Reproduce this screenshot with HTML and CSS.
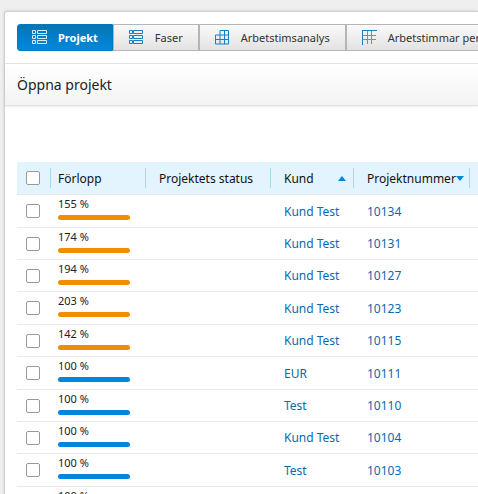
FILE: index.html
```html
<!DOCTYPE html>
<html lang="sv">
  <head>
    <meta charset="UTF-8" />
    <title>Öppna projekt</title>
    <link rel="stylesheet" href="styles.css">
  </head>
  <body>
    <main class="panel">
      <nav class="tabs">
        <button type="button" class="tab active">
          <svg class="icon" viewBox="0 0 15 15">
            <path d="M.5 .5h3v3h-3zM5.5 .5h9v3h-9zM.5 5.5h3v3h-3zM5.5 5.5h9v3h-9zM.5 10.5h3v3h-3zM5.5 10.5h9v3h-9z" />
          </svg>
          Projekt
        </button>
        <button type="button" class="tab">
          <svg class="icon" viewBox="0 0 15 15">
            <path d="M.5 .5h3v3h-3zM4.5 .5h9v3h-9zM.5 5.5h3v3h-3zM4.5 5.5h9v3h-9zM.5 10.5h3v3h-3zM4.5 10.5h9v3h-9z" />
          </svg>
          Faser
        </button>
        <button type="button" class="tab">
          <svg class="icon" viewBox="0 0 15 15">
            <path d="M5 .5h8.5v13.500h-13v-9h13M.5 9.500h13M5 .5v13.500M9.500 .5v13.500" />
          </svg>
          Arbetstimsanalys
        </button>
        <button type="button" class="tab">
          <svg class="icon" viewBox="0 0 15 15">
            <path d="M0 .5h15M.5 0v15" />
            <path class="thin" d="M1 5.5h13M1 9.5h13M5.5 1v13M9.5 1v13" />
          </svg>
          Arbetstimmar per fas
        </button>
      </nav>

      <h1 class="title">Öppna projekt</h1>

      <div class="list">
        <table class="projects">
          <thead>
            <tr>
              <th class="col-check"><input type="checkbox" aria-label="Markera alla" /></th>
              <th class="col-progress">Förlopp</th>
              <th class="col-status">Projektets status</th>
              <th class="col-customer"><span class="sort">Kund <i class="arrow up"></i></span></th>
              <th class="col-number"><span class="sort">Projektnummer<i class="arrow down"></i></span></th>
              <th></th>
            </tr>
          </thead>
          <tbody id="rows"></tbody>
        </table>
      </div>
    </main>

    <script>
      const projects = [
        { progress: 155, customer: "Kund Test", number: 10134 },
        { progress: 174, customer: "Kund Test", number: 10131 },
        { progress: 194, customer: "Kund Test", number: 10127 },
        { progress: 203, customer: "Kund Test", number: 10123 },
        { progress: 142, customer: "Kund Test", number: 10115 },
        { progress: 100, customer: "EUR", number: 10111 },
        { progress: 100, customer: "Test", number: 10110 },
        { progress: 100, customer: "Kund Test", number: 10104 },
        { progress: 100, customer: "Test", number: 10103 },
        { progress: 100, customer: "Test", number: 10102 },
      ];

      document.getElementById("rows").innerHTML = projects
        .map(
          (p) => `<tr>
          <td><input type="checkbox" aria-label="Markera ${p.number}" /></td>
          <td class="progress">${p.progress} %<div class="bar ${p.progress > 100 ? "over" : ""}"></div></td>
          <td></td>
          <td><a href="#">${p.customer}</a></td>
          <td><a href="#">${p.number}</a></td>
          <td></td>
        </tr>`
        )
        .join("");
    </script>
  </body>
</html>
```

FILE: styles.css
```css
* {
  box-sizing: border-box;
}

html {
  height: 100%;
  overflow: hidden;
}

body {
  height: 100%;
  margin: 0;
  padding: 11px 0 0 4px;
  overflow: hidden;
  background: #efefef;
  color: #222;
  font-family: "Noto Sans", "Open Sans", sans-serif;
  font-size: 12px;
}

.panel {
  min-height: 100%;
  background: #fff;
  border: 1px solid #d0d0d0;
  border-right: none;
  border-radius: 3px 0 0 0;
  box-shadow: 0 0 3px rgba(0, 0, 0, 0.15);
}

.tabs {
  display: flex;
  padding: 12px 0 12px 12px;
  overflow: hidden;
}

.tab {
  display: flex;
  flex: none;
  align-items: center;
  gap: 11px;
  height: 27px;
  padding: 0 15px;
  border: 1px solid #b5b5b5;
  background: linear-gradient(#fafafa, #e2e2e2);
  color: #333;
  font-family: inherit;
  font-size: 11px;
  white-space: nowrap;
  cursor: pointer;
}

.tab.active {
  padding: 0 14px;
  border-color: #0078bd;
  border-radius: 3px 0 0 3px;
  background: linear-gradient(#0874b4, #0088dd);
  color: #fff;
  font-weight: bold;
}

.icon {
  width: 15px;
  height: 15px;
  fill: none;
  stroke: #1580bd;
}

.icon .thin {
  stroke: #4b9dcc;
}

.active .icon {
  stroke: #d5ecfa;
}

.title {
  margin: 0;
  padding: 0 12px;
  border-top: 1px solid #e2e2e2;
  border-bottom: 1px solid #e2e2e2;
  background: linear-gradient(#fff, #f3f3f3);
  box-shadow: 0 1px 2px rgba(0, 0, 0, 0.06);
  font-size: 14px;
  font-weight: normal;
  line-height: 41px;
}

.list {
  padding: 56px 0 0 12px;
  overflow: hidden;
}

.projects {
  width: 100%;
  min-width: 600px;
  border-collapse: separate;
  border-spacing: 0;
  table-layout: fixed;
}

th,
td {
  height: 32px;
  padding: 0 0 0 13px;
  border-bottom: 1px solid #e8e8e8;
  text-align: left;
  font-weight: normal;
  white-space: nowrap;
}

th {
  height: 33px;
  background: linear-gradient(#a9daf5, #a9daf5) right 6px / 1px 20px no-repeat #e3f4ff;
  color: #111;
}

tr:nth-child(5n + 1) td,
tr:nth-child(5n + 4) td {
  height: 33px;
}

th:first-child,
td:first-child {
  padding-left: 9px;
}

th:nth-child(2),
td:nth-child(2) {
  padding-left: 7px;
}

.col-check {
  width: 34px;
}

.col-progress {
  width: 95px;
}

.col-status {
  width: 125px;
}

.col-customer {
  width: 83px;
}

.col-number {
  width: 116px;
}

input[type="checkbox"] {
  display: block;
  width: 14px;
  height: 14px;
  margin: 0;
  appearance: none;
  border: 1px solid #999;
  border-radius: 2px;
  background: #fff;
}

.sort {
  display: flex;
  align-items: center;
  justify-content: space-between;
  padding-right: 8px;
}

.arrow {
  border: 4px solid transparent;
}

.arrow.up {
  border-top: none;
  border-bottom: 5px solid #0086dc;
}

.arrow.down {
  border-top: 5px solid #0086dc;
  border-bottom: none;
}

td.progress {
  padding-bottom: 5px;
  font-size: 11px;
  line-height: 14px;
}

.bar {
  width: 72px;
  height: 5px;
  margin-top: 4px;
  border-radius: 3px;
  background: #0086dc;
}

.bar.over {
  background: #f18e00;
}

a {
  color: #0a6aad;
  text-decoration: none;
}
```
